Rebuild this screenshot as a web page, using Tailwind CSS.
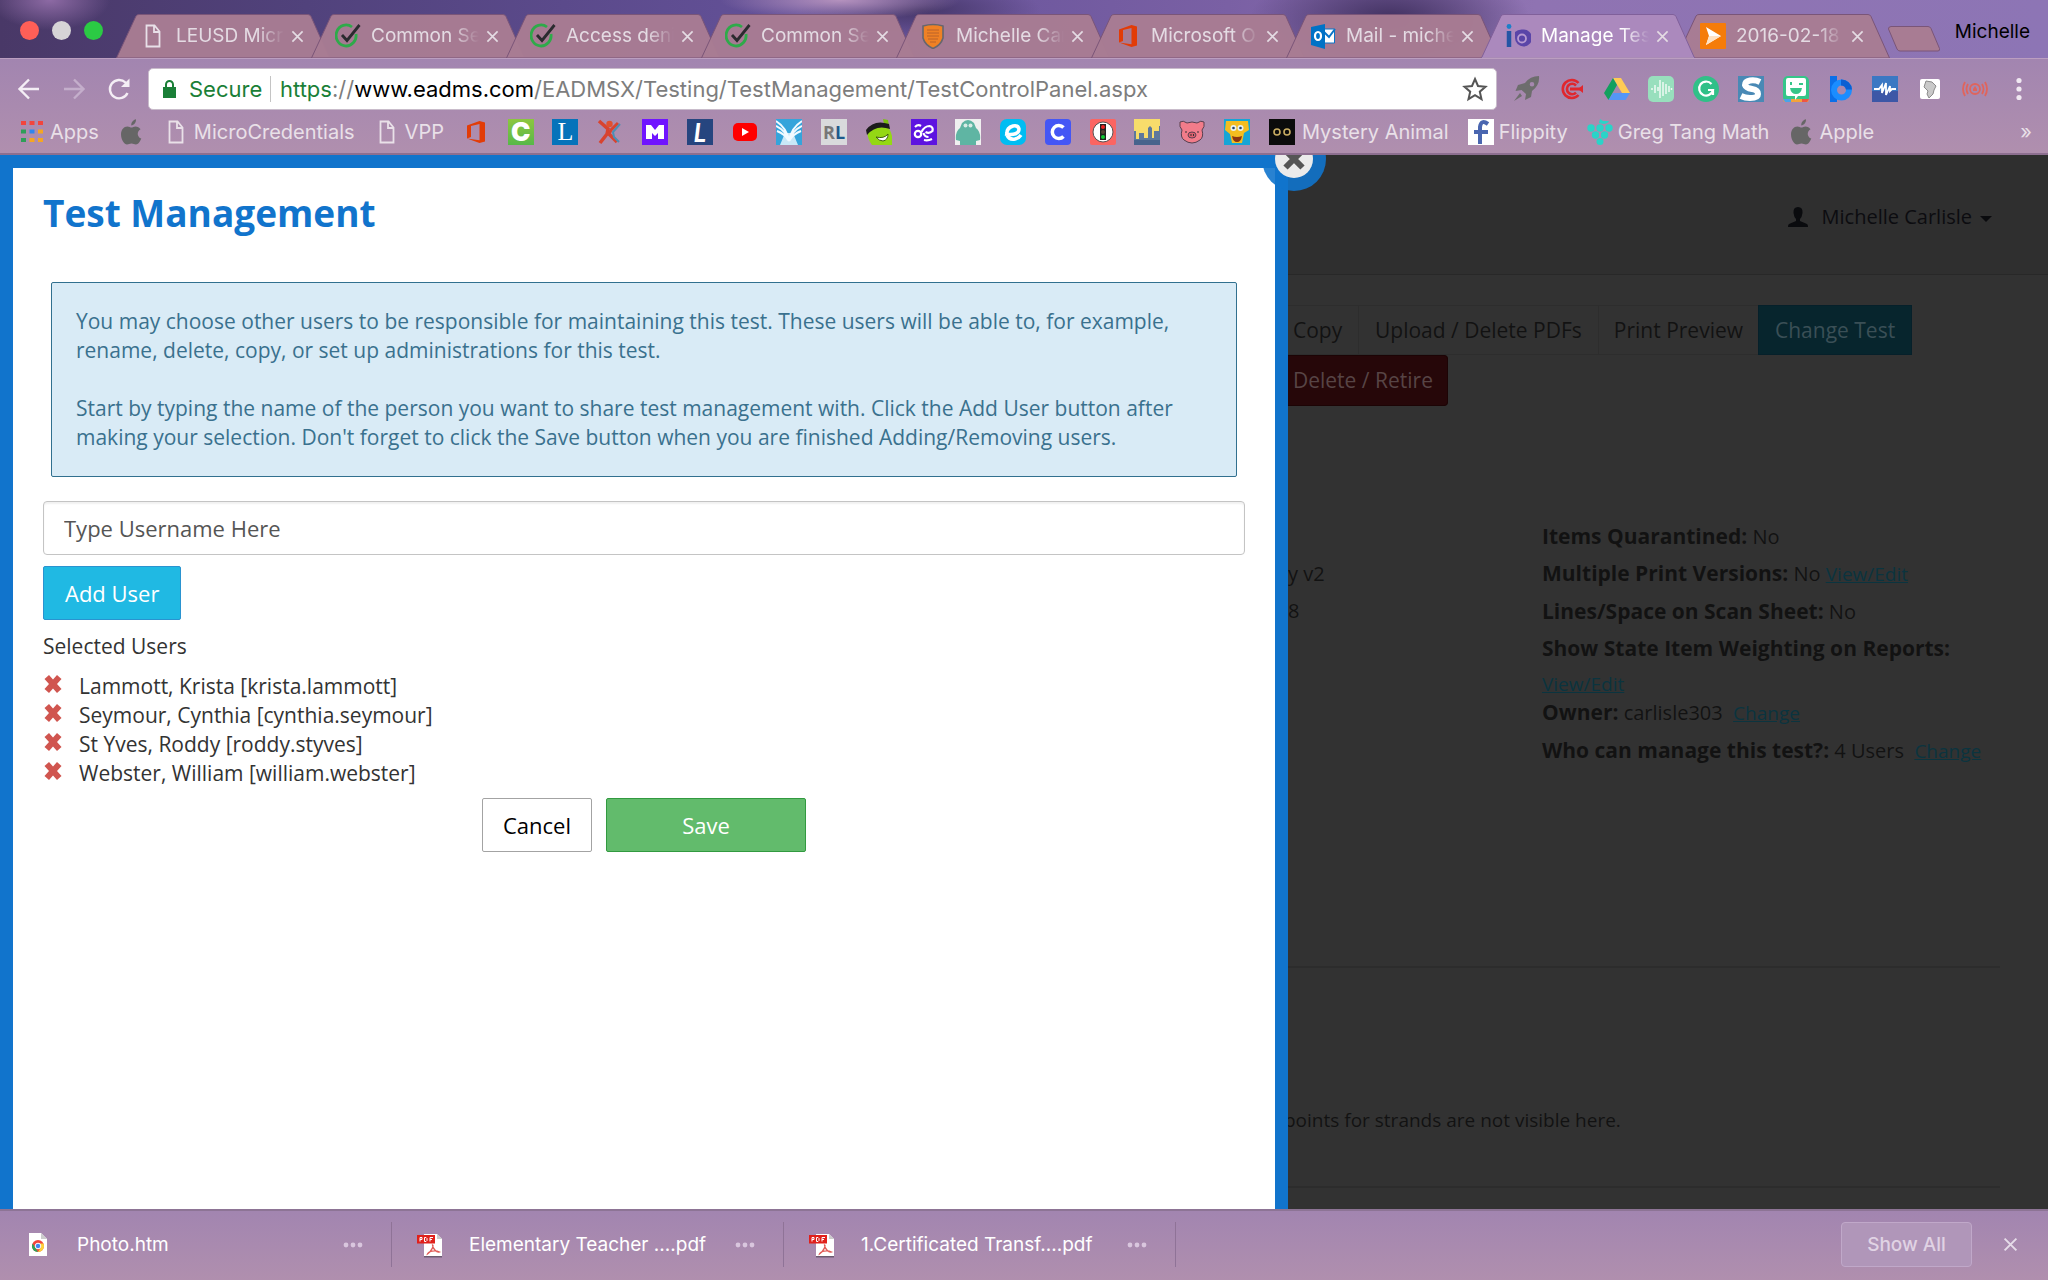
<!DOCTYPE html>
<html lang="en">
<head>
  <meta charset="UTF-8">
  <meta name="viewport" content="width=device-width, initial-scale=1.0">
  <title>Manage Test</title>
  <script src="https://cdn.jsdelivr.net/npm/@tailwindcss/browser@4"></script>
</head>
<body class="h-screen flex flex-col overflow-hidden font-['Inter',sans-serif] text-[20px] leading-6">

  <!-- Shared icons -->
  <svg class="hidden" aria-hidden="true">
    <symbol id="page" viewBox="0 0 26 26"><path d="M6.500 2.500h8l5 6v15h-13zM14 2.500v6.500h5.500" fill="none" stroke="currentColor" stroke-width="1.800"/></symbol>
    <symbol id="check" viewBox="0 0 26 26"><path d="M21 11a10 10.500 0 1 1-4-7" fill="none" stroke="#2eaa4a" stroke-width="2.800"/><path d="M7 12l5 5.500L24.500 2" fill="none" stroke="#2b2b2f" stroke-width="2.800"/></symbol>
    <symbol id="office" viewBox="0 0 26 26"><path d="M4 6.500L16.500 2 22 3.500v19L16.500 24 4 19.500l12.500 1.800V5L8 7v11l-4 1.500z" fill="#e23c07"/></symbol>
    <symbol id="apple" viewBox="0 0 26 26"><path d="M17.500 7.500c2 0 4 1.200 5 2.700-4 2.300-3.500 7.800.8 9.400-1.200 3-3.300 6-5.300 6-1.800 0-2.500-1-4.500-1s-2.800 1-4.500 1C6.500 25.600 3 20.500 3 15.500c0-5 3-8 6.300-8 1.800 0 3.200 1.100 4.200 1.100s2.300-1.100 4-1.100zM13.300 6.500C13 3.500 15.300.8 18 .3c.3 3-2 6-4.700 6.200z" fill="#666"/></symbol>
    <symbol id="close" viewBox="0 0 14 14"><path d="M1.500 1.500l11 11M12.500 1.500l-11 11" fill="none" stroke="currentColor" stroke-width="1.800"/></symbol>
    <symbol id="dots" viewBox="0 0 20 6"><g fill="#d9c6de"><circle cx="3" cy="3" r="2.400"/><circle cx="10" cy="3" r="2.400"/><circle cx="17" cy="3" r="2.400"/></g></symbol>
    <symbol id="remove" viewBox="0 0 20 20"><path d="M6 1l4 4.500L14 1l4.500 4-4.500 5 4.500 5-4.500 4-4-4.500L6 19l-4.500-4L6 10 1.500 5z" fill="#d0554f"/></symbol>
    <symbol id="pdf" viewBox="0 0 26 26"><path d="M7 2h13l5 5v17H7z" fill="#fff"/><path d="M20 2v5h5z" fill="#ccc"/><path d="M7 24h18v1.500H7z" fill="#6b5a70"/><rect y="3" width="18" height="8.500" fill="#e0201b"/><path d="M3 9.500v-4h2v2H3M7.500 5.500v4h1.500l1-1v-2l-1-1zM13 9.500v-4h3M13 7.500h2" fill="none" stroke="#fff"/><path d="M15.500 13c1.500 0-.5 6-5 9 1-3 8-4 12-2-3 1-7-4-7-7z" fill="none" stroke="#e05a55" stroke-width="1.300"/></symbol>
    <symbol id="tab" viewBox="0 0 214 44" preserveAspectRatio="none"><path d="M.5 44L20 2Q21 .5 23 .5h169q2 0 3 2L213.500 44z" fill="#a87c93" fill-opacity=".97" stroke="#7a5578" stroke-width="1"/></symbol>
    <symbol id="tab-active" viewBox="0 0 214 44" preserveAspectRatio="none"><path d="M.5 44L20 2Q21 .5 23 .5h169q2 0 3 2L213.500 44z" fill="#ab89bd" stroke="#80609a" stroke-width="1"/><path d="M1 44h212" stroke="#a98bb6" stroke-width="2"/></symbol>
  </svg>

  <!-- Tab strip -->
  <header class="h-[58px] shrink-0 flex items-end bg-[radial-gradient(ellipse_60px_30px_at_50px_0px,#8d6aa4,transparent),radial-gradient(ellipse_120px_20px_at_840px_0px,#b592be,transparent),radial-gradient(ellipse_140px_60px_at_1390px_20px,#40305f,transparent),radial-gradient(ellipse_120px_30px_at_920px_10px,#453668,transparent),linear-gradient(90deg,#493867_0%,#51427c_15%,#65529a_40%,#7a60a4_60%,#8f73b2_75%,#8d75b5_100%)]">
    <div class="w-[116px] h-full shrink-0 flex items-center gap-[13px] pl-5 pt-[3px]">
      <button aria-label="Close window" class="size-[19px] rounded-full bg-[#ff5f57]"></button>
      <button aria-label="Minimize window" class="size-[19px] rounded-full bg-[#d6d4d6]"></button>
      <button aria-label="Zoom window" class="size-[19px] rounded-full bg-[#2bca44]"></button>
    </div>
    <nav class="flex text-[19px] text-[#e4dbe3]">
      <div class="relative w-[195px] h-11 flex items-center pl-6">
        <svg class="absolute left-0 top-0 w-[214px] h-11"><use href="#tab"/></svg>
        <svg class="relative size-[26px] text-[#e8e0e8]"><use href="#page"/></svg>
        <span class="relative ml-[10px] w-[108px] whitespace-nowrap mask-r-from-75% mask-r-to-100%">LEUSD Micr</span>
        <button aria-label="Close tab" class="relative ml-[7px]"><svg class="size-[13px]"><use href="#close"/></svg></button>
      </div>
      <div class="relative w-[195px] h-11 flex items-center pl-6">
        <svg class="absolute left-0 top-0 w-[214px] h-11"><use href="#tab"/></svg>
        <svg class="relative size-[26px]"><use href="#check"/></svg>
        <span class="relative ml-[10px] w-[108px] whitespace-nowrap mask-r-from-75% mask-r-to-100%">Common Se</span>
        <button aria-label="Close tab" class="relative ml-[7px]"><svg class="size-[13px]"><use href="#close"/></svg></button>
      </div>
      <div class="relative w-[195px] h-11 flex items-center pl-6">
        <svg class="absolute left-0 top-0 w-[214px] h-11"><use href="#tab"/></svg>
        <svg class="relative size-[26px]"><use href="#check"/></svg>
        <span class="relative ml-[10px] w-[108px] whitespace-nowrap mask-r-from-75% mask-r-to-100%">Access deni</span>
        <button aria-label="Close tab" class="relative ml-[7px]"><svg class="size-[13px]"><use href="#close"/></svg></button>
      </div>
      <div class="relative w-[195px] h-11 flex items-center pl-6">
        <svg class="absolute left-0 top-0 w-[214px] h-11"><use href="#tab"/></svg>
        <svg class="relative size-[26px]"><use href="#check"/></svg>
        <span class="relative ml-[10px] w-[108px] whitespace-nowrap mask-r-from-75% mask-r-to-100%">Common Se</span>
        <button aria-label="Close tab" class="relative ml-[7px]"><svg class="size-[13px]"><use href="#close"/></svg></button>
      </div>
      <div class="relative w-[195px] h-11 flex items-center pl-6">
        <svg class="absolute left-0 top-0 w-[214px] h-11"><use href="#tab"/></svg>
        <svg class="relative size-[26px]" viewBox="0 0 26 26"><path d="M3 3q10-3 20 0v12q-2 7-10 10.500Q5 22 3 15z" fill="#ef8125" stroke="#66666e" stroke-width="1.600"/><path d="M7 7h12M7 10h12M7 13h12M8 16h10M10 19h6" stroke="#b9622a"/></svg>
        <span class="relative ml-[10px] w-[108px] whitespace-nowrap mask-r-from-75% mask-r-to-100%">Michelle Car</span>
        <button aria-label="Close tab" class="relative ml-[7px]"><svg class="size-[13px]"><use href="#close"/></svg></button>
      </div>
      <div class="relative w-[195px] h-11 flex items-center pl-6">
        <svg class="absolute left-0 top-0 w-[214px] h-11"><use href="#tab"/></svg>
        <svg class="relative size-[26px]"><use href="#office"/></svg>
        <span class="relative ml-[10px] w-[108px] whitespace-nowrap mask-r-from-75% mask-r-to-100%">Microsoft O</span>
        <button aria-label="Close tab" class="relative ml-[7px]"><svg class="size-[13px]"><use href="#close"/></svg></button>
      </div>
      <div class="relative w-[195px] h-11 flex items-center pl-6">
        <svg class="absolute left-0 top-0 w-[214px] h-11"><use href="#tab"/></svg>
        <svg class="relative size-[26px]" viewBox="0 0 26 26"><path d="M12 6h12.500v14H12z" fill="#fff" stroke="#0a74c8"/><path d="M14 9l5 5 6-8" fill="none" stroke="#0a74c8" stroke-width="2"/><path d="M1 4l14-3v25L1 22z" fill="#0072c6"/><ellipse cx="8" cy="13" rx="3" ry="4" fill="none" stroke="#fff" stroke-width="2.200"/></svg>
        <span class="relative ml-[10px] w-[108px] whitespace-nowrap mask-r-from-75% mask-r-to-100%">Mail - miche</span>
        <button aria-label="Close tab" class="relative ml-[7px]"><svg class="size-[13px]"><use href="#close"/></svg></button>
      </div>
      <div class="relative z-10 w-[195px] h-11 flex items-center pl-6 text-white">
        <svg class="absolute left-0 top-0 w-[214px] h-11"><use href="#tab-active"/></svg>
        <svg class="relative size-[26px]" viewBox="0 0 26 26"><circle cx="4" cy="3.500" r="2.400" fill="#1c7fc9"/><path d="M4 8v16" stroke="#2455a5" stroke-width="4.500"/><path d="M10 9q3-3 8-2.500a8.500 8.500 0 1 1-8 8.500z" fill="#5a45a8"/><circle cx="17" cy="15.500" r="4" fill="none" stroke="#b79ad0" stroke-width="1.800"/></svg>
        <span class="relative ml-[10px] w-[108px] whitespace-nowrap mask-r-from-75% mask-r-to-100%">Manage Tes</span>
        <button aria-label="Close tab" class="relative ml-[7px] text-[#e4dbe3]"><svg class="size-[13px]"><use href="#close"/></svg></button>
      </div>
      <div class="relative w-[195px] h-11 flex items-center pl-6">
        <svg class="absolute left-0 top-0 w-[214px] h-11"><use href="#tab"/></svg>
        <svg class="relative size-[26px]" viewBox="0 0 26 26"><rect width="26" height="26" rx="1" fill="#f57c0a"/><path d="M6 4l15 9-15 9 3-9z" fill="#fff"/><path d="M6 22l3-9h12z" fill="#ffe2c4"/></svg>
        <span class="relative ml-[10px] w-[108px] whitespace-nowrap mask-r-from-75% mask-r-to-100%">2016-02-18</span>
        <button aria-label="Close tab" class="relative ml-[7px]"><svg class="size-[13px]"><use href="#close"/></svg></button>
      </div>
    </nav>
    <button aria-label="New tab" class="ml-4 mb-[5px]"><svg class="w-[54px] h-7" viewBox="0 0 54 28"><path d="M4 1.500h37q2 0 3 2l8.500 20q.5 2.500-1.500 2.500H13q-2 0-3-2L1.500 4q-.5-2 2.500-2.500z" fill="#a87c93" stroke="#7a5578"/></svg></button>
    <button class="ml-auto mr-[18px] self-center pt-[5px] text-[19px] text-black">Michelle</button>
  </header>

  <!-- Address bar and bookmarks -->
  <section class="h-[97px] shrink-0 flex flex-col border-t border-t-[#bb9ec0] border-b-2 border-b-[#8d6f90] bg-linear-to-b from-[#a285b0] to-[#b08fae] text-[#ece4ec]">
    <div class="h-[59px] flex items-center px-4">
      <button aria-label="Back"><svg class="size-[26px]" viewBox="0 0 26 26"><path d="M23 13H4M13 3.500L3.500 13l9.500 9.500" fill="none" stroke="#f4eef5" stroke-width="2.400"/></svg></button>
      <button aria-label="Forward" class="ml-[19px]"><svg class="size-[26px]" viewBox="0 0 26 26"><path d="M3 13h19M13 3.500l9.500 9.500-9.500 9.500" fill="none" stroke="#c4aecb" stroke-width="2.400"/></svg></button>
      <button aria-label="Reload" class="ml-[19px]"><svg class="size-[26px]" viewBox="0 0 26 26"><path d="M21.500 17A9.200 9.200 0 1 1 19.500 6.500L22 9" fill="none" stroke="#f4eef5" stroke-width="2.400"/><path d="M23.500 2.500V11H15z" fill="#f4eef5"/></svg></button>
      <div class="ml-4 flex-1 h-[42px] rounded-[5px] border border-[#c9bccb] bg-white flex items-center pl-[13px] pr-2 text-[22px]">
        <svg class="w-[15px] h-[18px]" viewBox="0 0 15 18"><path d="M1 7h13v11H1z" fill="#1a7f37"/><path d="M4 8V4.500a3.500 3.500 0 0 1 7 0V8" fill="none" stroke="#1a7f37" stroke-width="2"/></svg>
        <span class="ml-3 w-[72px] text-[#1a7f37]">Secure</span>
        <span class="mx-[9px] w-px h-[26px] bg-[#c4c4c4]"></span>
        <p class="flex-1 text-[#7d7d7d]"><span class="text-[#1a7f37]">https</span>://<span class="text-black">www.eadms.com</span>/EADMSX/Testing/TestManagement/TestControlPanel.aspx</p>
        <button aria-label="Bookmark this page"><svg class="size-[26px]" viewBox="0 0 26 26"><path d="M13 3l3 7 7.500.700-5.700 5 1.700 7.500L13 19.200l-6.500 4 1.700-7.500-5.700-5L10 10z" fill="none" stroke="#555" stroke-width="2"/></svg></button>
      </div>
      <!-- Extensions -->
      <div class="ml-[17px] w-[474px] flex justify-between">
        <svg class="size-[26px]" viewBox="0 0 26 26"><path d="M25 0q-9 0-14 7L4 9l-2.500 6 6-1 4.500 4-1 6 6-3 1-6q8-6 7-15zM18 6a2.300 2.300 0 1 1 0 4.600A2.300 2.300 0 0 1 18 6zM6 17l-6 8 8-5z" fill="#6d6d6d" fill-rule="evenodd"/></svg>
        <svg class="size-[26px]" viewBox="0 0 26 26"><g fill="none" stroke="#e0272e"><path d="M19.500 7A9 9 0 1 0 19.500 19M17 9.500a5.200 5.200 0 1 0 0 7" stroke-width="2.600"/><path d="M11 13h13" stroke-width="3"/></g><path d="M19 13l5-4v8z" fill="#e0272e"/></svg>
        <svg class="size-[26px]" viewBox="0 0 26 26"><path d="M9 2h8l9 15h-8z" fill="#fc5"/><path d="M9 2l4 7L4.500 24 0 17z" fill="#11a05f"/><path d="M9 17h17l-4.500 7h-17z" fill="#5596f6"/></svg>
        <svg class="size-[26px]" viewBox="0 0 26 26"><rect width="26" height="26" rx="5" fill="#98dfbd"/><path d="M4 12v2M7 9v8M10 11v4M12 4v18M15 6v14M18 8v10M21 10v6M23.500 12v2" stroke="#eefaf3" stroke-width="1.500"/></svg>
        <svg class="size-[26px]" viewBox="0 0 26 26"><circle cx="13" cy="13" r="13" fill="#30c088"/><path d="M18.500 8A7 7 0 1 0 20 14h-5M20 14v5" fill="none" stroke="#fff" stroke-width="2.200"/></svg>
        <svg class="size-[26px]" viewBox="0 0 26 26"><rect width="26" height="26" fill="#4989b5"/><path d="M22 6Q17 3.500 12 4.500T7 9q1 3 7 4t6 5-8 4q-5 0-9-2" fill="none" stroke="#fff" stroke-width="6"/></svg>
        <svg class="size-[26px]" viewBox="0 0 26 26"><rect width="26" height="26" rx="5" fill="#35c689"/><path d="M0 23l1 3h24l1-3z" fill="#f2a33c"/><path d="M0 23h8v3H2z" fill="#4aa3e8"/><path d="M19 23h7l-2 3h-5z" fill="#ee5544"/><path d="M5 2h16q2 0 2 2v14q0 2-2 2h-6l-3 4v-4H5q-2 0-2-2V4q0-2 2-2z" fill="#fff"/><path d="M8 6v3M16 8h4" stroke="#35c689" stroke-width="2"/><path d="M7 12h12q-1 6-6 6t-6-6z" fill="#35c689"/></svg>
        <svg class="size-[26px]" viewBox="0 0 26 26"><path d="M2 0h7v26H2z" fill="#0b6fe8"/><circle cx="13.500" cy="14" r="7.500" fill="none" stroke="#1a8dff" stroke-width="6"/><path d="M13 3.500a10.500 10.500 0 0 1 11 10h-6q-1-4-5-4z" fill="#0a5fd2"/></svg>
        <svg class="size-[26px]" viewBox="0 0 26 26"><rect width="26" height="26" fill="#3b78c3"/><rect y="15" width="26" height="11" fill="#3d57a6"/><path d="M2 13h5l3-4 0 8 4-10v12l4-9v5l2-2h4" fill="none" stroke="#fff" stroke-width="1.800"/></svg>
        <svg class="size-[26px]" viewBox="0 0 26 26"><rect x="3" y="3" width="20" height="20" rx="2" fill="#fff"/><path d="M9 5l6 1 4 4-2 4-1 4-4 4-2-4 1-3-4-4z" fill="#c9c9c9" stroke="#8b8b8b"/></svg>
        <svg class="size-[26px]" viewBox="0 0 26 26"><g fill="none" stroke="#e0645c" stroke-width="1.800"><circle cx="13" cy="13" r="5"/><path d="M6 8q-3 5 0 10M20 8q3 5 0 10M3 6q-4 7 0 14M23 6q4 7 0 14"/></g><path d="M11 15h4v-2l-2-3-2 3z" fill="#e0645c"/></svg>
      </div>
      <button aria-label="Menu" class="ml-[18px]"><svg class="size-[26px]" viewBox="0 0 26 26"><g fill="#f0e8f1"><circle cx="13" cy="4.500" r="2.600"/><circle cx="13" cy="13" r="2.600"/><circle cx="13" cy="21.500" r="2.600"/></g></svg></button>
    </div>
    <!-- Bookmarks -->
    <nav class="h-7 flex items-center gap-[19px] pl-[19px] pr-4 whitespace-nowrap text-[#e9e0e8]">
      <a href="#" class="flex items-center gap-[5px]"><svg class="size-[26px]" viewBox="0 0 26 26"><path d="M2 2h5v4H2zM10.500 2h5v4h-5zM19 2h5v4h-5z" fill="#f2453d"/><path d="M2 10.500h5v4H2zM2 19h5v4H2z" fill="#2e9e58"/><path d="M10.500 10.500h5v4h-5z" fill="#2f86ee"/><path d="M19 10.500h5v4h-5zM10.500 19h5v4h-5zM19 19h5v4h-5z" fill="#f5a623"/></svg>Apps</a>
      <a href="#" aria-label="Apple"><svg class="size-[26px]"><use href="#apple"/></svg></a>
      <a href="#" class="flex items-center gap-[5px]"><svg class="size-[26px]"><use href="#page"/></svg>MicroCredentials</a>
      <a href="#" class="flex items-center gap-[5px]"><svg class="size-[26px]"><use href="#page"/></svg>VPP</a>
      <div class="w-[832px] flex items-center justify-between">
        <svg class="size-[26px]"><use href="#office"/></svg>
        <span class="size-[26px] bg-linear-to-b from-[#8cc63f] to-[#56b848] text-white text-[26px] leading-[26px] font-black text-center">C</span>
        <span class="size-[26px] bg-[#0673ba] text-white text-[26px] leading-[26px] font-['Liberation_Serif',serif] text-center">L</span>
        <svg class="size-[26px]" viewBox="0 0 26 26"><path d="M2 2l9 8-1 5-7 9M12 15l8 8" fill="none" stroke="#d8432f" stroke-width="3.500"/><path d="M21 4l-7 7-2 4" fill="none" stroke="#d8432f" stroke-width="3"/><path d="M23 5l-7 8 1 5 5 5" fill="none" stroke="#4a8fb5" stroke-width="2"/><circle cx="12.500" cy="5" r="3.200" fill="#e0502f"/></svg>
        <svg class="size-[26px]" viewBox="0 0 26 26"><rect width="26" height="26" fill="#7014ff"/><path d="M4 20V6h5l4 5 4-5h5v14h-6v-6l-3 3-3-3v6z" fill="#fff"/></svg>
        <span class="size-[26px] bg-[#26457f] text-white text-[26px] leading-[26px] font-bold italic font-['Lato',sans-serif] text-center">L</span>
        <svg class="size-[26px]" viewBox="0 0 26 26"><rect x="1" y="4" width="24" height="18" rx="5" fill="#f00"/><path d="M10 9l7 4-7 4z" fill="#fff"/></svg>
        <svg class="size-[26px]" viewBox="0 0 26 26"><rect width="26" height="26" fill="#35a4db"/><path d="M9 14h8l5 12H4z" fill="#c9e8f7"/><path d="M13 22Q11 9 0 2M13 22Q10 12 0 7M13 22Q9 15 1 12M13 22Q15 9 26 2M13 22q3-10 13-15M13 22q4-7 12-10" fill="none" stroke="#f3faff" stroke-width="2"/></svg>
        <span class="size-[26px] bg-[#d9dadc] text-[#777] text-[18px] leading-[26px] font-bold font-['Open_Sans',sans-serif] text-center">R<span class="text-[#1d5a8c]">L</span></span>
        <svg class="size-[26px]" viewBox="0 0 26 26"><path d="M2 10Q8 3 22 8q6 9 4 18H6Q0 18 2 10z" fill="#94d814"/><path d="M17 0l5 1 1 6-5-2z" fill="#7cc010"/><path d="M0 11Q8 0 23 5l1 5Q10 5 1 16z" fill="#1b1b1b"/><path d="M10 18q8 2 12-3 0 6-5 7-4 0-7-4z" fill="#fff" stroke="#40600c"/></svg>
        <svg class="size-[26px]" viewBox="0 0 26 26"><rect width="26" height="26" fill="#5d14e0"/><g fill="none" stroke="#fff" stroke-width="2.200"><circle cx="7" cy="15" r="3.200"/><path d="M4 8q3-3 6-1M10.500 13q3-6 8-6 4 1 3 5-3 3-7 1M12.500 14q1 4 5 4M13 21q4 1 8-1"/></g></svg>
        <svg class="size-[26px]" viewBox="0 0 26 26"><rect width="26" height="26" fill="#efefef"/><path d="M7 4q6-6 12 0l2 5q5 4 4 12l-4 1v4H5v-4l-4-1Q0 13 5 9z" fill="#5fb5a3"/><circle cx="10.500" cy="6.500" r="2" fill="#d8ece6"/><circle cx="15.500" cy="6.500" r="2" fill="#d8ece6"/></svg>
        <svg class="size-[26px]" viewBox="0 0 26 26"><rect width="26" height="26" rx="7" fill="#00bdf2"/><path d="M5 15q14 2 14-5-1-4-6-3-7 2-6 9 2 5 8 4 4-1 6-4" fill="none" stroke="#fff" stroke-width="3.500"/></svg>
        <svg class="size-[26px]" viewBox="0 0 26 26"><rect width="26" height="26" rx="4" fill="#4456f5"/><path d="M18.500 8.500A6.500 6.500 0 1 0 18.500 17.500" fill="none" stroke="#fff" stroke-width="3.500"/></svg>
        <svg class="size-[26px]" viewBox="0 0 26 26"><rect width="26" height="26" rx="2" fill="#fb6562"/><circle cx="13" cy="13" r="10" fill="#fff" stroke="#555"/><path d="M10 5h6v16h-6z" fill="#222"/><circle cx="13" cy="8" r="2" fill="#e22"/><circle cx="13" cy="13" r="2" fill="#543"/><circle cx="13" cy="18" r="2" fill="#1c3"/></svg>
        <svg class="size-[26px]" viewBox="0 0 26 26"><rect width="26" height="26" fill="#f7dc6b"/><path d="M0 26V12h2v8h3v-6h5v5h4V9l2-2 2 2v10h2v-7h5V7h1v19z" fill="#5d789c"/><path d="M0 21h26v5H0z" fill="#47638c"/></svg>
        <svg class="size-[26px]" viewBox="0 0 26 26"><path d="M1 3q3-2 7 1 5-2 10 0 4-3 7-1 1 5-2 8 2 7-2 10-8 6-16 0-4-3-2-10-3-3-2-8z" fill="#f27c8a" stroke="#574050"/><ellipse cx="13" cy="16" rx="4" ry="3" fill="#e0606f" stroke="#574050"/><path d="M7 12v2M19 12v2M12 15v2M14.500 15v2" stroke="#333"/></svg>
        <svg class="size-[26px]" viewBox="0 0 26 26"><rect width="26" height="26" fill="#16a5d6"/><path d="M2 2h22l1 9-5 3-2 10H8L6 15l-5-4z" fill="#f3bd20"/><circle cx="9.500" cy="9" r="3" fill="#e8f2f5"/><circle cx="16.500" cy="9" r="3" fill="#e8f2f5"/><circle cx="9.500" cy="9" r="1.300" fill="#246"/><circle cx="16.500" cy="9" r="1.300" fill="#246"/><path d="M8 17q5 2 10 0-1 6-5 6t-5-6z" fill="#8b3410"/></svg>
        <svg class="size-[26px]" viewBox="0 0 26 26"><rect width="26" height="26" fill="#0b0b0b"/><g fill="none" stroke="#c9ad62" stroke-width="1.600"><circle cx="8" cy="13" r="3"/><circle cx="18" cy="13" r="3"/></g></svg>
      </div>
      <a href="#" class="-ml-[12px]">Mystery Animal</a>
      <a href="#" class="flex items-center gap-[5px]"><svg class="size-[26px]" viewBox="0 0 26 26"><rect width="26" height="26" fill="#fff"/><path d="M20 5q-7-5-8 3v17M6 13h14" fill="none" stroke="#4a66b0" stroke-width="4"/></svg>Flippity</a>
      <a href="#" class="flex items-center gap-[5px]"><svg class="size-[26px]" viewBox="0 0 26 26"><g fill="#2ad4c8"><circle cx="4" cy="9" r="3.700"/><circle cx="13" cy="9" r="3.700"/><circle cx="22" cy="9" r="3.700"/><circle cx="8.500" cy="16" r="3.700"/><circle cx="17.500" cy="16" r="3.700"/><circle cx="13" cy="22.500" r="3.500"/><path d="M12 4l1-4 3 2h6q-1 3-6 3z"/></g></svg>Greg Tang Math</a>
      <a href="#" class="flex items-center gap-[5px]"><svg class="size-[26px]"><use href="#apple"/></svg>Apple</a>
      <button aria-label="More bookmarks" class="ml-auto">»</button>
    </nav>
  </section>

  <!-- Page -->
  <main class="flex-1 min-h-0 flex bg-[#323232] font-['Open_Sans',sans-serif] text-[21px] leading-[29px]">

    <!-- Test management dialog -->
    <section role="dialog" aria-labelledby="dialog-title" class="relative w-[1288px] shrink-0 bg-white border-x-[13px] border-t-[13px] border-[#1174cc] text-[#333]">
      <div class="px-[30px] pt-[18px]">
        <h1 id="dialog-title" class="text-[37px] leading-[54px] font-bold text-[#1174cc]">Test Management</h1>
        <div class="mx-2 mt-[42px] p-6 rounded-xs border border-[#31708f] bg-[#d9ebf6] text-[#3a718e]">
          <p>You may choose other users to be responsible for maintaining this test. These users will be able to, for example, rename, delete, copy, or set up administrations for this test.</p>
          <p class="mt-[29px]">Start by typing the name of the person you want to share test management with. Click the Add User button after making your selection. Don't forget to click the Save button when you are finished Adding/Removing users.</p>
        </div>
        <input type="text" aria-label="Username" placeholder="Type Username Here" class="block mt-6 w-full h-[54px] px-5 rounded border border-[#c4c4c4] shadow-[inset_0_2px_2px_#0000000f] text-[22px] placeholder:text-[#555]">
        <button class="block mt-[11px] h-[54px] px-[21px] rounded-xs border border-[#2a93d0] bg-[#20b9e3] text-white text-[22px]">Add User</button>
        <h2 class="mt-3">Selected Users</h2>
        <ul class="mt-[11px]">
          <li class="flex gap-4"><button aria-label="Remove Krista Lammott" class="h-6"><svg class="size-5"><use href="#remove"/></svg></button>Lammott, Krista [krista.lammott]</li>
          <li class="flex gap-4"><button aria-label="Remove Cynthia Seymour" class="h-6"><svg class="size-5"><use href="#remove"/></svg></button>Seymour, Cynthia [cynthia.seymour]</li>
          <li class="flex gap-4"><button aria-label="Remove Roddy St Yves" class="h-6"><svg class="size-5"><use href="#remove"/></svg></button>St Yves, Roddy [roddy.styves]</li>
          <li class="flex gap-4"><button aria-label="Remove William Webster" class="h-6"><svg class="size-5"><use href="#remove"/></svg></button>Webster, William [william.webster]</li>
        </ul>
        <div class="mt-[10px] flex justify-center gap-[14px] text-[22px]">
          <button class="h-[54px] w-[110px] rounded-xs border border-[#a3a3a3] text-black">Cancel</button>
          <button class="h-[54px] w-[200px] rounded-xs border border-[#329a40] bg-[#62bb6c] text-white">Save</button>
        </div>
      </div>
      <!-- Close badge, cut off by the top edge -->
      <div class="absolute -top-[13px] -right-[51px] w-16 h-9 overflow-hidden">
        <button aria-label="Close dialog" class="absolute bottom-0 left-0 size-16 rounded-full bg-[#1174cc]/90 flex items-center justify-center">
          <svg class="size-[38px]" viewBox="0 0 38 38"><circle cx="19" cy="19" r="19" fill="#ebebeb"/><path d="M10.500 10.500l17 17M27.500 10.500l-17 17" stroke="#555" stroke-width="6"/></svg>
        </button>
      </div>
    </section>

    <!-- Dimmed page behind the dialog -->
    <div class="flex-1 min-w-0 overflow-hidden flex flex-col text-[#121212]">
      <div class="h-[120px] shrink-0 flex items-center justify-end pr-14 pt-1 border-b border-[#282828] bg-[#2f2f2f]">
        <button class="flex items-center text-[20px] text-[#0c0c10]">
          <svg class="size-5 mr-[14px]" viewBox="0 0 20 20"><path d="M10 0q5 0 4.500 6-.5 4-2.500 6v2l7 3q1 .5 1 3H0q0-2.500 1-3l7-3v-2Q6 10 5.500 6 5 0 10 0z" fill="#0a0b0e"/></svg>
          Michelle Carlisle
          <svg class="w-3 h-[6px] ml-2 mt-1" viewBox="0 0 12 6"><path d="M0 0h12L6 6z" fill="#0a0b0e"/></svg>
        </button>
      </div>

      <div class="mt-[30px] flex h-[50px] shrink-0">
        <button class="pl-[5px] w-[71px] text-left border-y border-r border-[#2d2d2d]">Copy</button>
        <button class="px-4 border-y border-r border-[#2d2d2d]">Upload / Delete PDFs</button>
        <button class="px-[15px] border-y border-[#2d2d2d]">Print Preview</button>
        <button class="px-4 border border-[#06202a] bg-[#07252d] text-[#3a4f56]">Change Test</button>
      </div>
      <button class="w-40 h-[51px] shrink-0 pl-[5px] text-left rounded-r border border-l-0 border-[#1c0405] bg-[#260709] text-[#574445]">Delete / Retire</button>

      <div class="mt-28 flex pr-12 text-[20px]">
        <div class="w-[254px] pt-[37px] leading-[37px]">
          <p>y v2</p>
          <p>8</p>
        </div>
        <div class="flex-1 leading-[37px]">
          <p><b class="text-[21px]">Items Quarantined:</b> No</p>
          <p><b class="text-[21px]">Multiple Print Versions:</b> No <a href="#" class="underline text-[19px] text-[#0b343f]">View/Edit</a></p>
          <p><b class="text-[21px]">Lines/Space on Scan Sheet:</b> No</p>
          <p><b class="text-[21px]">Show State Item Weighting on Reports:</b></p>
          <p class="pt-[7px] leading-5"><a href="#" class="underline text-[19px] text-[#0b343f]">View/Edit</a></p>
          <p><b class="text-[21px]">Owner:</b> carlisle303&nbsp; <a href="#" class="underline text-[19px] text-[#0b343f]">Change</a></p>
          <p><b class="text-[21px]">Who can manage this test?:</b> 4 Users&nbsp; <a href="#" class="underline text-[19px] text-[#0b343f]">Change</a></p>
        </div>
      </div>

      <div class="mt-[196px] mr-12 h-[222px] shrink-0 border-y-2 border-[#2c2c2c] flex items-center pt-[86px] text-[19px]">
        <p class="-ml-1">points for strands are not visible here.</p>
      </div>
    </div>
  </main>

  <!-- Downloads -->
  <footer class="h-[71px] shrink-0 flex items-center border-t-2 border-[#8d7495] bg-linear-to-b from-[#a285b0] to-[#b08fae] pb-[2px] text-[19px] text-white">
    <div class="w-[392px] h-[45px] flex items-center pl-[25px] pr-7 border-r border-[#8f7397]">
      <svg class="size-[26px]" viewBox="0 0 26 26"><path d="M4 1h12l6 6v17H4z" fill="#fff"/><path d="M16 1v6h6z" fill="#ccc"/><circle cx="13" cy="14" r="6" fill="#f2453d"/><path d="M7.500 11.500L13 20a6 6 0 0 1-5.500-8.500z" fill="#2ea55a"/><path d="M13 11.500h5.500A6 6 0 0 1 13 20l3-5z" fill="#fdd13a"/><circle cx="13" cy="14" r="2.800" fill="#4285f4" stroke="#fff"/></svg>
      <span class="ml-[26px] flex-1">Photo.htm</span>
      <button aria-label="Options"><svg class="w-5 h-[6px]"><use href="#dots"/></svg></button>
    </div>
    <div class="w-[392px] h-[45px] flex items-center pl-[25px] pr-7 border-r border-[#8f7397]">
      <svg class="size-[26px]"><use href="#pdf"/></svg>
      <span class="ml-[26px] flex-1">Elementary Teacher ....pdf</span>
      <button aria-label="Options"><svg class="w-5 h-[6px]"><use href="#dots"/></svg></button>
    </div>
    <div class="w-[392px] h-[45px] flex items-center pl-[25px] pr-7 border-r border-[#8f7397]">
      <svg class="size-[26px]"><use href="#pdf"/></svg>
      <span class="ml-[26px] flex-1">1.Certificated Transf....pdf</span>
      <button aria-label="Options"><svg class="w-5 h-[6px]"><use href="#dots"/></svg></button>
    </div>
    <button class="ml-auto w-[131px] h-[45px] rounded border border-[#c0a8c9] bg-[#b096b9] text-[#e0d3e4] font-medium">Show All</button>
    <button aria-label="Close downloads bar" class="ml-[31px] mr-[30px] text-[#e6dce9]"><svg class="size-[15px]"><use href="#close"/></svg></button>
  </footer>
</body>
</html>
